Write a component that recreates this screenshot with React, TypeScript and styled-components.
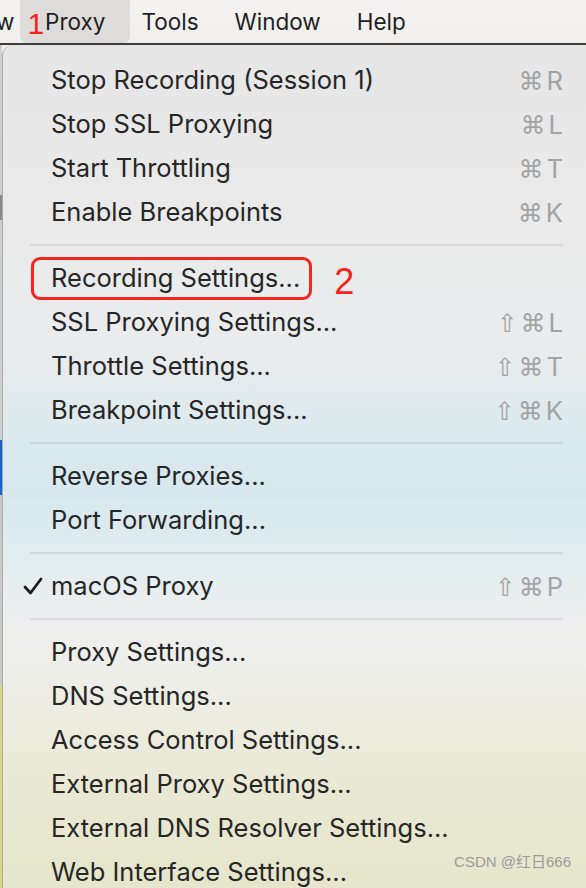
import React from 'react';
import styled, { createGlobalStyle } from 'styled-components';

const GlobalStyle = createGlobalStyle`
  html, body {
    margin: 0;
    padding: 0;
    background: #f2f1ef;
  }
  body {
    font-family: Inter, "Noto Sans", "DejaVu Sans", sans-serif;
    -webkit-font-smoothing: antialiased;
  }
`;

const Screen = styled.div`
  height: 888px;
  overflow: hidden;
  position: relative;
  width: 586px;
`;

const MenuBar = styled.div`
  align-items: center;
  background: linear-gradient(#f5f4f2, #efeeec);
  border-bottom: 2px solid #3c3c3c;
  box-sizing: border-box;
  display: flex;
  height: 45px;
`;

const BarItem = styled.div<{ $active?: boolean }>`
  align-items: center;
  border-radius: 0 0 7px 7px;
  color: #1f1f1f;
  display: flex;
  font-size: 22.5px;
  height: 43px;
  padding: 0 18px;

  ${p => p.$active && `
    background: #dddcda;
    margin: 0 -6px 0 6px;
    padding: 0 24px 0 7px;
  `}
`;

const Clipped = styled.div`
  color: #1f1f1f;
  font-size: 22.5px;
  margin-left: -4px;
`;

const StepMark = styled.span<{ $big?: boolean }>`
  color: #f5221b;
  font-family: "Liberation Sans", Arial, sans-serif;
  font-size: ${p => (p.$big ? '36px' : '30px')};
  font-weight: 400;
  line-height: 1;
`;

const BarStep = styled(StepMark)`
  margin-right: 1px;
  margin-top: 5px;
`;

const Body = styled.div`
  display: flex;
  height: 843px;
`;

const BackStrip = styled.div`
  background: linear-gradient(
    #cfcfcf 0, #cfcfcf 150px,
    #8a8a8a 150px, #8a8a8a 175px,
    #d0d0d0 175px, #d0d0d0 395px,
    #1a63c9 395px, #1a63c9 450px,
    #c9c9c9 450px, #c9c9c9 640px,
    #d8d88a 640px, #d8d88a 843px
  );
  flex: none;
  width: 2px;
`;

const Menu = styled.div`
  background: linear-gradient(
    #e6e6e6 0px,
    #eaeaea 180px,
    #eaeced 300px,
    #dae9ee 400px,
    #d6e8ee 450px,
    #e3edf0 520px,
    #eeeeee 580px,
    #eeeee8 640px,
    #e9e9d4 740px,
    #e6e6cc 843px
  );
  border-left: 1px solid #a9a9a9;
  border-top-left-radius: 11px;
  box-sizing: border-box;
  flex: 1;
  padding: 13px 23px 0 0;
`;

const Item = styled.div`
  align-items: center;
  color: #262626;
  display: grid;
  font-size: 25.5px;
  grid-template-columns: 48px auto 1fr auto;
  height: 44px;
`;

const Check = styled.svg`
  display: block;
  height: 18px;
  margin-left: 20px;
  width: 20px;
`;

const Label = styled.span<{ $boxed?: boolean }>`
  line-height: 44px;
  position: relative;
  white-space: nowrap;

  ${p => p.$boxed && `
    &::after {
      border: 3px solid #f0261f;
      border-radius: 9px;
      bottom: 0;
      content: '';
      left: -20px;
      position: absolute;
      right: -12px;
      top: 1px;
    }
  `}
`;

const LabelStep = styled(StepMark)`
  margin-left: 34px;
  margin-top: 8px;
`;

const Shortcut = styled.span`
  align-items: baseline;
  color: #a3a3a3;
  display: flex;
  gap: 3px;
  grid-column: 4;
  justify-content: flex-end;
`;

const Glyph = styled.span`
  font-family: "DejaVu Sans", sans-serif;
  font-size: 25px;
`;

const Separator = styled.div`
  align-items: center;
  display: flex;
  height: 22px;
  padding-left: 27px;

  &::before {
    background: rgba(0, 0, 0, 0.075);
    content: '';
    flex: 1;
    height: 2px;
  }
`;

const Watermark = styled.div`
  bottom: 17px;
  color: #9b9b9b;
  font-family: "Liberation Sans", "Noto Sans CJK SC", sans-serif;
  font-size: 15px;
  position: absolute;
  right: 15px;
`;

type Entry =
  | { sep: true }
  | { label: string; keys?: string; shift?: boolean; checked?: boolean; boxed?: boolean };

const entries: Entry[] = [
  { label: 'Stop Recording (Session 1)', keys: 'R' },
  { label: 'Stop SSL Proxying', keys: 'L' },
  { label: 'Start Throttling', keys: 'T' },
  { label: 'Enable Breakpoints', keys: 'K' },
  { sep: true },
  { label: 'Recording Settings...', boxed: true },
  { label: 'SSL Proxying Settings...', keys: 'L', shift: true },
  { label: 'Throttle Settings...', keys: 'T', shift: true },
  { label: 'Breakpoint Settings...', keys: 'K', shift: true },
  { sep: true },
  { label: 'Reverse Proxies...' },
  { label: 'Port Forwarding...' },
  { sep: true },
  { label: 'macOS Proxy', keys: 'P', shift: true, checked: true },
  { sep: true },
  { label: 'Proxy Settings...' },
  { label: 'DNS Settings...' },
  { label: 'Access Control Settings...' },
  { label: 'External Proxy Settings...' },
  { label: 'External DNS Resolver Settings...' },
  { label: 'Web Interface Settings...' },
];

const CheckIcon = () => (
  <Check viewBox="0 0 20 18">
    <polyline
      points="2,10 7.5,16 18,2"
      fill="none"
      stroke="#1e1e1e"
      strokeWidth="2.8"
      strokeLinecap="round"
      strokeLinejoin="round"
    />
  </Check>
);

export default function App() {
  return (
    <Screen>
      <GlobalStyle />
      <MenuBar>
        <Clipped>w</Clipped>
        <BarItem $active>
          <BarStep>1</BarStep>
          Proxy
        </BarItem>
        <BarItem>Tools</BarItem>
        <BarItem>Window</BarItem>
        <BarItem>Help</BarItem>
      </MenuBar>
      <Body>
        <BackStrip />
        <Menu>
          {entries.map((e, i) =>
            'sep' in e ? (
              <Separator key={i} />
            ) : (
              <Item key={i}>
                {e.checked ? <CheckIcon /> : <span />}
                <Label $boxed={e.boxed}>{e.label}</Label>
                {e.boxed ? <LabelStep $big>2</LabelStep> : <span />}
                {e.keys && (
                  <Shortcut>
                    {e.shift && <Glyph>⇧</Glyph>}
                    <Glyph>⌘</Glyph>
                    {e.keys}
                  </Shortcut>
                )}
              </Item>
            )
          )}
        </Menu>
      </Body>
      <Watermark>CSDN @红日666</Watermark>
    </Screen>
  );
}
